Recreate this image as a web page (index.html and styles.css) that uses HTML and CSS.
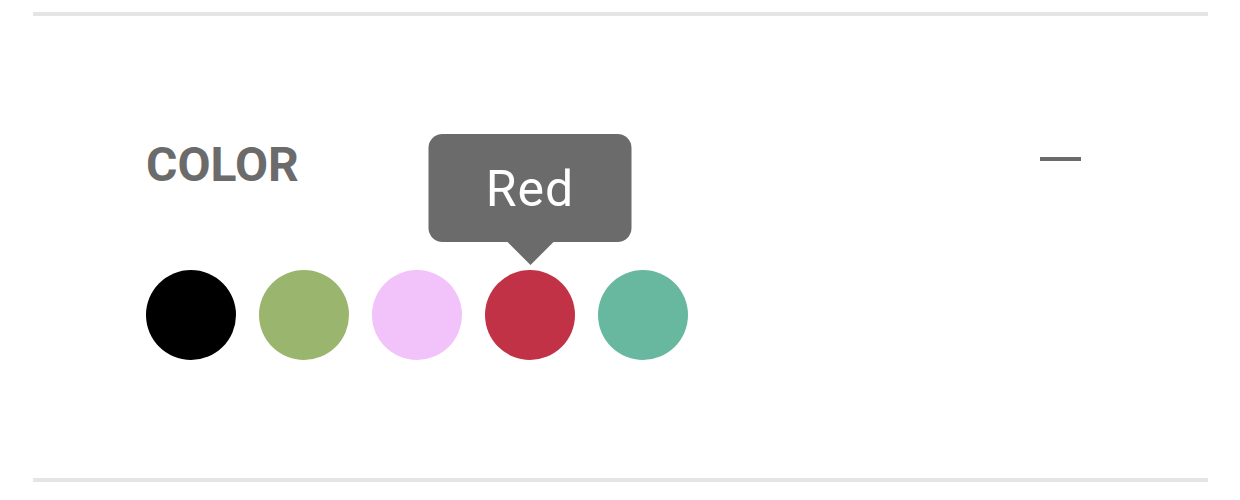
FILE: index.html
```html
<!DOCTYPE html>
<html>
<head>
<meta charset="utf-8">
<link rel="stylesheet" href="styles.css">
</head>
<body>
<section class="panel">
  <div class="header">
    <h2 class="title">COLOR</h2>
    <div class="collapse" aria-label="Collapse"></div>
  </div>
  <div class="swatches">
    <span class="swatch" style="background:#000000"></span>
    <span class="swatch" style="background:#9ab56d"></span>
    <span class="swatch" style="background:#f2c2fa"></span>
    <span class="swatch active" style="background:#c13246">
      <span class="tooltip">Red</span>
    </span>
    <span class="swatch" style="background:#68b89f"></span>
  </div>
</section>
</body>
</html>
```
FILE: styles.css
```css
html, body {
  margin: 0;
  padding: 0;
  background: #ffffff;
}
body {
  font-family: Roboto, "Liberation Sans", Arial, sans-serif;
}
.panel {
  margin: 12px 32px 0 33px;
  border-top: 4px solid #e5e5e5;
  border-bottom: 4px solid #e5e5e5;
  height: 462px;
  box-sizing: content-box;
  padding: 0 127px 0 113px;
}
.header {
  display: flex;
  justify-content: space-between;
  align-items: flex-start;
  padding-top: 121px;
}
.title {
  margin: 0;
  font-size: 48px;
  line-height: 56px;
  font-weight: 700;
  color: #6b6b6b;
}
.collapse {
  width: 41px;
  height: 4px;
  background: #6b6b6b;
  margin-top: 20px;
}
.swatches {
  display: flex;
  gap: 23px;
  margin-top: 77px;
}
.swatch {
  position: relative;
  width: 90px;
  height: 90px;
  border-radius: 50%;
  display: block;
}
.tooltip {
  position: absolute;
  left: 50%;
  bottom: calc(100% + 28px);
  transform: translateX(-50%);
  width: 203px;
  height: 108px;
  box-sizing: border-box;
  padding-top: 2px;
  background: #6b6b6b;
  border-radius: 14px;
  color: #ffffff;
  font-size: 50px;
  line-height: 106px;
  text-align: center;
  letter-spacing: 1px;
}
.tooltip::after {
  content: "";
  position: absolute;
  left: 50%;
  top: 100%;
  margin-left: -23px;
  border-left: 23px solid transparent;
  border-right: 23px solid transparent;
  border-top: 23px solid #6b6b6b;
}
```
